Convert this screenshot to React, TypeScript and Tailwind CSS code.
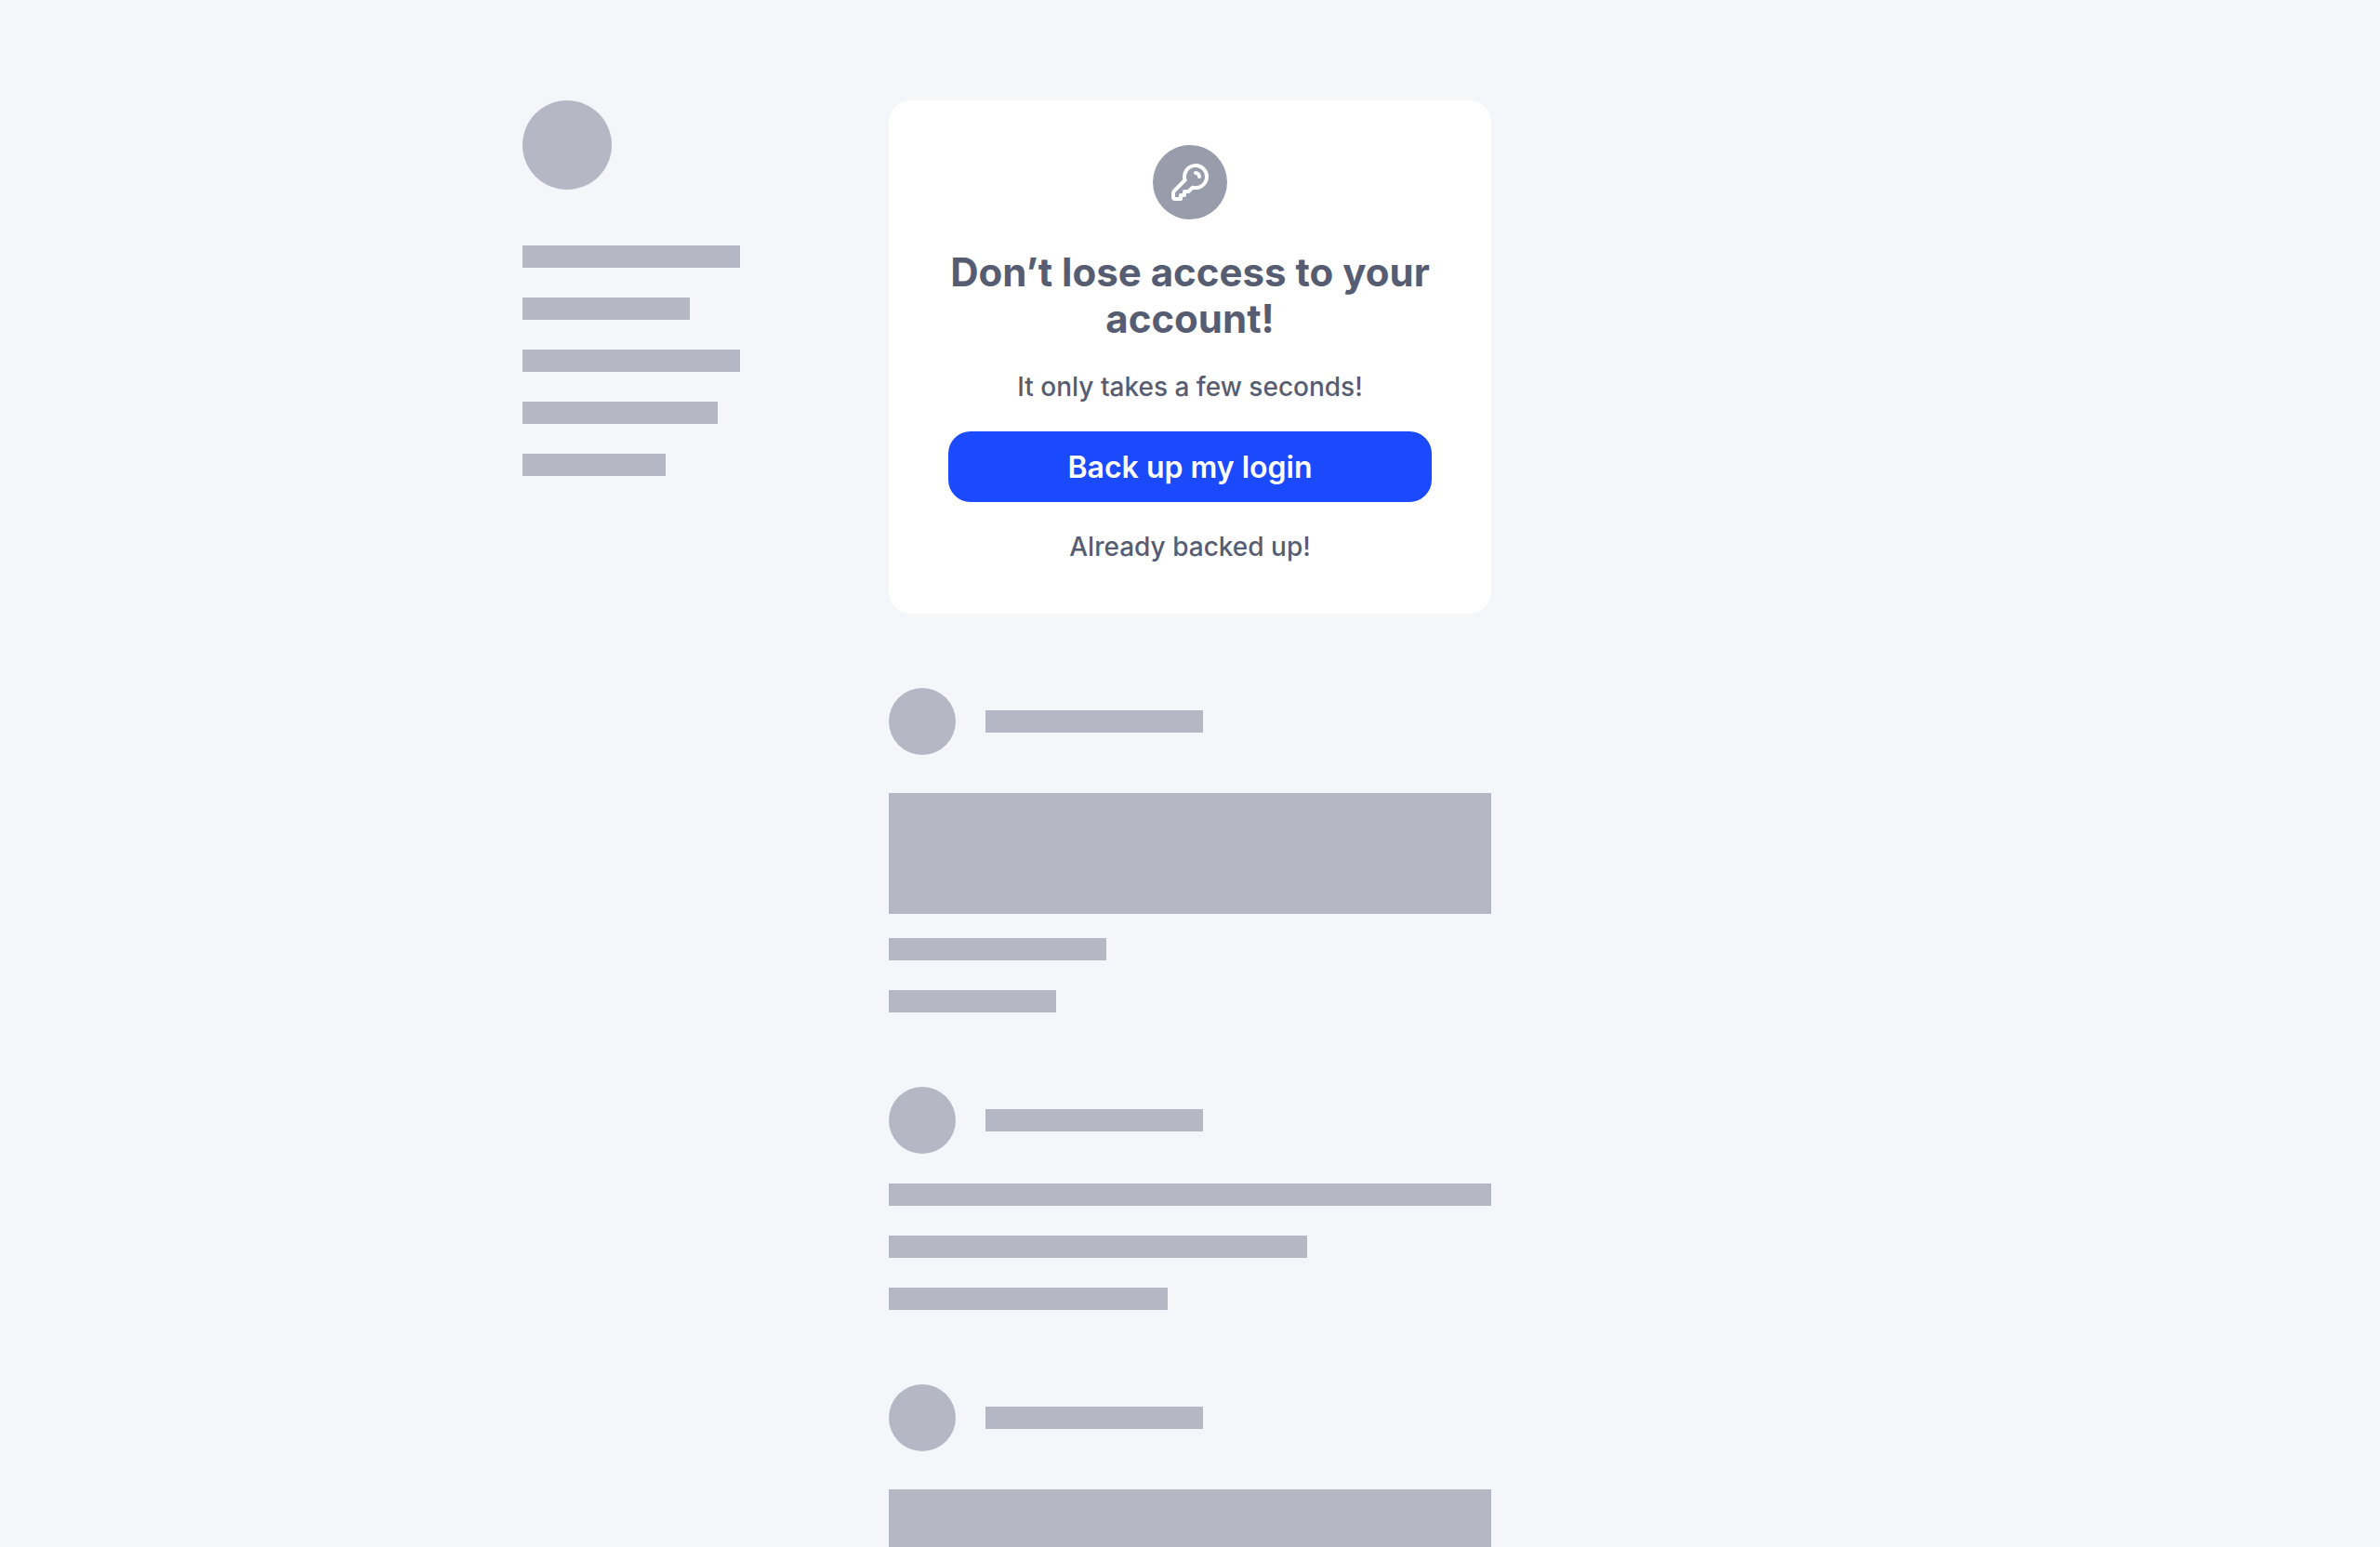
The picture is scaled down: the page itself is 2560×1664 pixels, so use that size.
import React from "react";

function Bar({ className }: { className: string }) {
  return <div className={`h-6 max-w-full bg-[#b5b8c4] ${className}`} />;
}

function Avatar({ className }: { className: string }) {
  return <div className={`shrink-0 rounded-full bg-[#b5b8c4] ${className}`} />;
}

function KeyIcon() {
  return (
    <svg
      viewBox="0 0 24 24"
      className="size-12"
      fill="none"
      stroke="white"
      strokeWidth="2"
      strokeLinecap="round"
      strokeLinejoin="round"
      aria-hidden="true"
    >
      <path d="M9.3 10.87A6 6 0 1 1 13.4 14.8L11.2 17H9V19H7V21H4A1 1 0 0 1 3 20V18Q3 17.2 3.6 16.6Z" />
      <path d="M15 7a2 2 0 0 1 2 2" />
    </svg>
  );
}

function PostHeader() {
  return (
    <div className="flex items-center gap-8">
      <Avatar className="size-18" />
      <Bar className="w-[234px]" />
    </div>
  );
}

function MediaPost() {
  return (
    <article>
      <PostHeader />
      <div className="mt-[41px] h-[130px] bg-[#b5b8c4]" />
      <div className="mt-[26px] flex flex-col gap-8">
        <Bar className="w-[234px]" />
        <Bar className="w-[180px]" />
      </div>
    </article>
  );
}

function TextPost() {
  return (
    <article className="flex flex-col gap-8">
      <PostHeader />
      <Bar className="w-full" />
      <Bar className="w-[450px]" />
      <Bar className="w-[300px]" />
    </article>
  );
}

function BackupCard() {
  return (
    <section className="flex flex-col items-center rounded-3xl bg-white px-16 pt-12 pb-13 text-center text-[28px] leading-10 font-medium text-[#565d72]">
      <div className="flex size-20 items-center justify-center rounded-full bg-[#999dab]">
        <KeyIcon />
      </div>
      <h1 className="mt-8 text-[42px] leading-[50px] font-bold">
        Don’t lose access to your account!
      </h1>
      <p className="mt-7">It only takes a few seconds!</p>
      <button
        type="button"
        className="mt-7 w-full rounded-3xl bg-[#1b49fc] pt-[19px] pb-[17px] text-[32px] font-semibold text-white"
      >
        Back up my login
      </button>
      <button type="button" className="mt-7">
        Already backed up!
      </button>
    </section>
  );
}

export default function App() {
  return (
    <div className="h-screen overflow-hidden bg-[#f4f6fa] font-['Inter',sans-serif]">
      <div className="mx-auto grid max-w-[1436px] grid-cols-[minmax(0,234px)_minmax(0,648px)_minmax(0,234px)] justify-between pt-27">
        <aside>
          <Avatar className="size-24" />
          <div className="mt-15 flex flex-col gap-8">
            <Bar className="w-[234px]" />
            <Bar className="w-[180px]" />
            <Bar className="w-[234px]" />
            <Bar className="w-[210px]" />
            <Bar className="w-[154px]" />
          </div>
        </aside>
        <main className="flex flex-col gap-20">
          <BackupCard />
          <MediaPost />
          <TextPost />
          <MediaPost />
        </main>
      </div>
    </div>
  );
}
